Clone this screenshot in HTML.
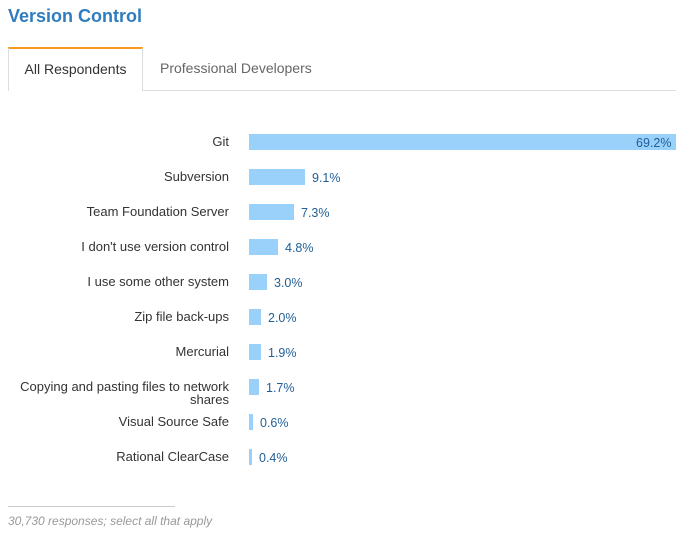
<!DOCTYPE html><html><head><style>
body{margin:0;width:689px;height:536px;background:#fff;font-family:"Liberation Sans",sans-serif;position:relative;overflow:hidden}
.t{position:absolute;left:8px;top:6px;font-size:18px;font-weight:bold;color:#2f7cbf}
.tab1{position:absolute;left:8px;top:47px;width:135px;height:44px;border:1px solid #ddd;border-top:2px solid #f79a1e;border-bottom:none;background:#fff;box-sizing:border-box;font-size:14px;color:#333;text-align:center;line-height:40px}
.tab2{position:absolute;left:160px;top:47px;font-size:14px;color:#666;line-height:42px}
.line{position:absolute;left:143px;top:90px;width:533px;height:1px;background:#ddd}
.l{position:absolute;right:460px;font-size:13px;color:#333;text-align:right;line-height:13px}
.b{position:absolute;left:249px;height:16px;background:#99d1fb}
.v{position:absolute;font-size:12.5px;color:#1f5f96}
.f1{position:absolute;left:8px;top:506px;width:167px;height:1px;background:#ccc}
.f2{position:absolute;left:8px;top:514px;font-size:12px;font-style:italic;color:#999}
</style></head><body>
<div class="t">Version Control</div>
<div class="tab1">All Respondents</div>
<div class="tab2">Professional Developers</div>
<div class="line"></div>
<div class="l" style="top:135px">Git</div><div class="b" style="top:134px;width:427px"></div><div class="v" style="left:636px;top:136px">69.2%</div>
<div class="l" style="top:170px">Subversion</div><div class="b" style="top:169px;width:56px"></div><div class="v" style="left:312px;top:171px">9.1%</div>
<div class="l" style="top:205px">Team Foundation Server</div><div class="b" style="top:204px;width:45px"></div><div class="v" style="left:301px;top:206px">7.3%</div>
<div class="l" style="top:240px">I don't use version control</div><div class="b" style="top:239px;width:29px"></div><div class="v" style="left:285px;top:241px">4.8%</div>
<div class="l" style="top:275px">I use some other system</div><div class="b" style="top:274px;width:18px"></div><div class="v" style="left:274px;top:276px">3.0%</div>
<div class="l" style="top:310px">Zip file back-ups</div><div class="b" style="top:309px;width:12px"></div><div class="v" style="left:268px;top:311px">2.0%</div>
<div class="l" style="top:345px">Mercurial</div><div class="b" style="top:344px;width:12px"></div><div class="v" style="left:268px;top:346px">1.9%</div>
<div class="l" style="top:380px;width:225px">Copying and pasting files to network shares</div><div class="b" style="top:379px;width:10px"></div><div class="v" style="left:266px;top:381px">1.7%</div>
<div class="l" style="top:415px">Visual Source Safe</div><div class="b" style="top:414px;width:4px"></div><div class="v" style="left:260px;top:416px">0.6%</div>
<div class="l" style="top:450px">Rational ClearCase</div><div class="b" style="top:449px;width:3px"></div><div class="v" style="left:259px;top:451px">0.4%</div>
<div class="f1"></div>
<div class="f2">30,730 responses; select all that apply</div>
</body></html>
